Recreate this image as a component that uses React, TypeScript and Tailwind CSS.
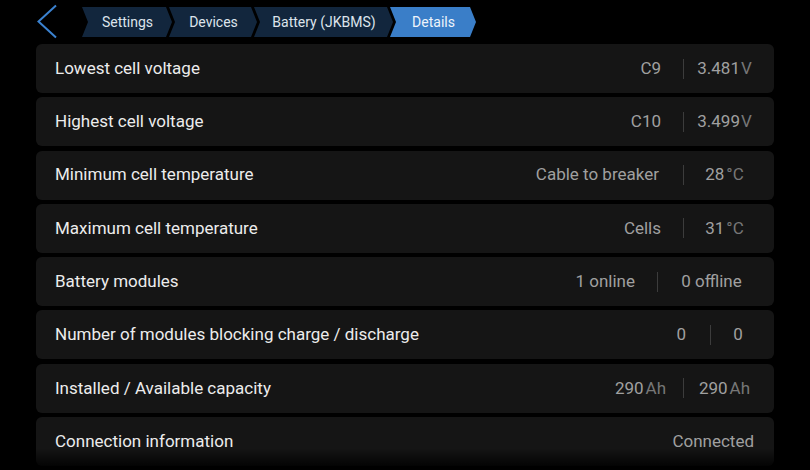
import React from "react";

type Row = {
  label: string;
  left?: React.ReactNode;
  leftPad?: string;
  right?: React.ReactNode;
  rightW?: string;
  single?: React.ReactNode;
};

function Q({ v, u, gap = "ml-[1px]" }: { v: string; u: string; gap?: string }) {
  return (
    <span>
      <span className="text-[#a0a0a0]">{v}</span>
      <span className={`${gap} text-[#777777]`}>{u}</span>
    </span>
  );
}

const rows: Row[] = [
  { label: "Lowest cell voltage", left: "C9", leftPad: "pr-[22px]", right: <Q v="3.481" u="V" />, rightW: "w-[81px]" },
  { label: "Highest cell voltage", left: "C10", leftPad: "pr-[22px]", right: <Q v="3.499" u="V" />, rightW: "w-[81px]" },
  { label: "Minimum cell temperature", left: "Cable to breaker", leftPad: "pr-[24px]", right: <Q v="28" u="°C" gap="ml-[2px]" />, rightW: "w-[81px]" },
  { label: "Maximum cell temperature", left: "Cells", leftPad: "pr-[22px]", right: <Q v="31" u="°C" gap="ml-[2px]" />, rightW: "w-[81px]" },
  { label: "Battery modules", left: "1 online", leftPad: "pr-[22px]", right: "0 offline", rightW: "w-[107px]" },
  { label: "Number of modules blocking charge / discharge", left: "0", leftPad: "pr-[24px]", right: "0", rightW: "w-[54px]" },
  { label: "Installed / Available capacity", left: <Q v="290" u="Ah" gap="ml-[2px]" />, leftPad: "pr-[17px]", right: <Q v="290" u="Ah" gap="ml-[2px]" />, rightW: "w-[81px]" },
  { label: "Connection information", single: "Connected" },
];

const crumbs = [
  { t: "Settings", w: "w-[90px]", active: false },
  { t: "Devices", w: "w-[88px]", active: false },
  { t: "Battery (JKBMS)", w: "w-[139px]", active: false },
  { t: "Details", w: "w-[86px]", active: true },
];

export default function App() {
  return (
    <div className="w-[810px] h-[470px] bg-black overflow-hidden relative" style={{ fontFamily: "Roboto, 'Noto Sans', sans-serif" }}>
      {/* Header */}
      <div className="h-[44px] flex items-start">
        <div className="w-[82px] h-[44px] flex items-start pl-[36px] pt-[4px]">
          <svg width="22" height="36" viewBox="0 0 22 36">
            <polyline points="20,1.5 2.5,17.5 20,33.5" fill="none" stroke="#3b82d0" strokeWidth="2" />
          </svg>
        </div>
        <div className="flex mt-[7px]">
          {crumbs.map((c, i) => (
            <div
              key={c.t}
              className={`${c.w} ${i > 0 ? "-ml-[3px]" : ""} h-[30px] flex items-center justify-center text-[14px] ${
                c.active ? "bg-[#3a7ec8] text-[#eef4fb]" : "bg-[#12263d] text-[#dde4ec]"
              } [clip-path:polygon(0_0,calc(100%-6px)_0,100%_50%,calc(100%-6px)_100%,0_100%,6px_50%)]`}
            >
              <span className="pl-[1px]">{c.t}</span>
            </div>
          ))}
        </div>
      </div>

      {/* Rows */}
      <div className="ml-[36px] w-[738px] flex flex-col gap-[4.3px]">
        {rows.map((r) => (
          <div key={r.label} className="h-[49px] bg-[#151515] rounded-[6px] flex items-center pl-[19px] pr-[9px] text-[17px]">
            <span className="text-[#ececec] flex-1">{r.label}</span>
            {r.single ? (
              <span className="text-[#a0a0a0] pr-[11px]">{r.single}</span>
            ) : (
              <div className="flex items-center text-[#a0a0a0]">
                <span className={`${r.leftPad} text-right`}>{r.left}</span>
                <span className="w-[1px] h-[20px] bg-[#3c3c3c]" />
                <span className={`${r.rightW} text-center`}>{r.right}</span>
              </div>
            )}
          </div>
        ))}
      </div>

      {/* bottom fade */}
      <div className="absolute left-0 right-0 bottom-0 h-[22px] bg-gradient-to-b from-transparent to-black pointer-events-none" />
    </div>
  );
}
